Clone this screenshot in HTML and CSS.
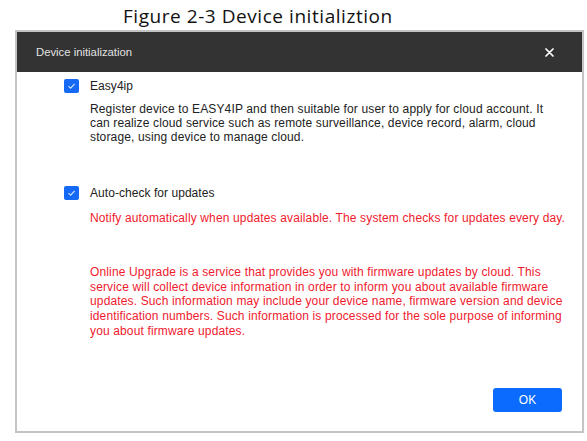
FILE: index.html
```html
<!DOCTYPE html>
<html lang="en">
<head>
<meta charset="utf-8">
<title>Device initialization</title>
<link rel="stylesheet" href="styles.css">
</head>
<body>
<div class="figure-title">Figure 2-3 Device initializtion</div>
<div class="dialog">
  <div class="dialog-header">
    <span class="dialog-title">Device initialization</span>
    <svg class="close" width="9" height="9" viewBox="0 0 9 9"><path d="M1 1 L8 8 M8 1 L1 8" stroke="#ffffff" stroke-width="1.7" stroke-linecap="round"/></svg>
  </div>
  <div class="dialog-body">
    <div class="option">
      <span class="checkbox"><svg width="15" height="14" viewBox="0 0 15 14"><path d="M4.5 7.2 L6.6 9.2 L10.6 5" fill="none" stroke="#cfe0ff" stroke-width="1.1"/></svg></span>
      <span class="option-label">Easy4ip</span>
    </div>
    <p class="desc desc-cloud">Register device to EASY4IP and then suitable for user to apply for cloud account. It<br>can realize cloud service such as remote surveillance, device record, alarm, cloud<br>storage, using device to manage cloud.</p>
    <div class="option option-update">
      <span class="checkbox"><svg width="15" height="14" viewBox="0 0 15 14"><path d="M4.5 7.2 L6.6 9.2 L10.6 5" fill="none" stroke="#cfe0ff" stroke-width="1.1"/></svg></span>
      <span class="option-label">Auto-check for updates</span>
    </div>
    <p class="desc warn warn-notify">Notify automatically when updates available. The system checks for updates every day.</p>
    <p class="desc warn warn-upgrade">Online Upgrade is a service that provides you with firmware updates by cloud. This<br>service will collect device information in order to inform you about available firmware<br>updates. Such information may include your device name, firmware version and device<br>identification numbers. Such information is processed for the sole purpose of informing<br>you about firmware updates.</p>
    <div class="actions">
      <button class="btn-ok" type="button">OK</button>
    </div>
  </div>
</div>
</body>
</html>
```
FILE: styles.css
```css
html, body {
  margin: 0;
  padding: 0;
  background: #ffffff;
}
body {
  width: 587px;
  height: 441px;
  overflow: hidden;
}
.figure-title {
  font-family: "Open Sans", "Noto Sans", sans-serif;
  font-size: 19px;
  letter-spacing: 0.55px;
  line-height: 24px;
  color: #111111;
  padding: 4px 0 0 123px;
  height: 26px;
}
.dialog {
  margin-left: 15px;
  width: 565px;
  border: 2px solid #c4c4c4;
  background: #ffffff;
  font-family: "Liberation Sans", Arial, sans-serif;
}
.dialog-header {
  height: 40px;
  background: #333333;
  display: flex;
  align-items: center;
  justify-content: space-between;
  padding: 0 28px 0 19px;
}
.dialog-title {
  color: #e2e2e2;
  font-size: 11.3px;
}
.close {
  display: block;
}
.dialog-body {
  padding: 6px 20px 19px 47px;
}
.option {
  display: flex;
  align-items: center;
  height: 15px;
}
.checkbox {
  width: 15px;
  height: 14px;
  border-radius: 2px;
  background: #1669f5;
  display: flex;
}
.option-label {
  margin-left: 11px;
  font-size: 12px;
  letter-spacing: 0.05px;
  color: #222222;
}
.desc {
  margin: 9px 0 0 26px;
  font-size: 12px;
  letter-spacing: 0.14px;
  line-height: 14.2px;
  color: #222222;
  white-space: nowrap;
}
.option-update {
  margin-top: 41px;
}
.warn {
  color: #f01a2e;
}
.warn-notify {
  margin-top: 10px;
}
.warn-upgrade {
  margin-top: 40px;
  line-height: 14.75px;
}
.actions {
  display: flex;
  justify-content: flex-end;
  margin-top: 49px;
}
.btn-ok {
  width: 69px;
  height: 24px;
  border: none;
  border-radius: 3px;
  background: #0b6bff;
  color: #ffffff;
  font-family: "Liberation Sans", Arial, sans-serif;
  font-size: 12px;
  padding: 0;
}
```
